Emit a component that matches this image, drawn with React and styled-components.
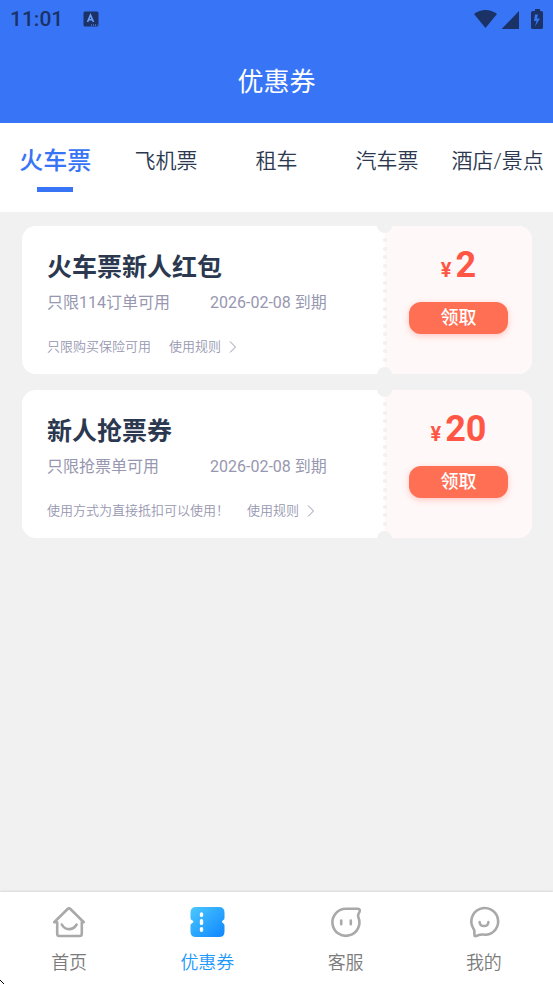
import React, { useState } from "react";
import styled, { createGlobalStyle } from "styled-components";

const tabs = ["火车票", "飞机票", "租车", "汽车票", "酒店/景点"];

const coupons = [
  { id: 1, title: "火车票新人红包", scope: "只限114订单可用", date: "2026-02-08 到期", note: "只限购买保险可用", price: 2 },
  { id: 2, title: "新人抢票券", scope: "只限抢票单可用", date: "2026-02-08 到期", note: "使用方式为直接抵扣可以使用！", price: 20 },
];

const HomeIcon = () => (
  <svg width="36" height="36" viewBox="0 0 36 36" fill="none" stroke="#a9a9a9" strokeWidth="2.6" strokeLinecap="round" strokeLinejoin="round">
    <path d="M5.6 18.2H3.2L16.6 5Q18 3.600 19.400 5L32.800 18.200H30.800V29.800Q30.800 32 28.600 32H8.400Q6.200 32 6.200 29.800V18.200" />
    <path d="M10.800 20.500C14 26.600 22 26.600 25.600 20.500" />
  </svg>
);

const CouponIcon = () => (
  <svg width="36" height="36" viewBox="0 0 36 36">
    <defs>
      <linearGradient id="couponFill" x1="0" y1="0" x2="1" y2="1">
        <stop offset="0" stopColor="#4cc8ff" />
        <stop offset="1" stopColor="#0d86ff" />
      </linearGradient>
    </defs>
    <path fill="url(#couponFill)" d="M7 3H30Q35.500 3 35.500 8.500V14Q35.500 15.500 34.400 16.100Q31.600 17.800 34.400 19.500Q35.500 20.200 35.500 21.500V27.500Q35.500 33 30 33H7Q1.500 33 1.500 27.500V21.500Q1.500 20.200 2.600 19.500Q6.400 17.800 2.600 16.100Q1.500 15.500 1.500 14V8.500Q1.500 3 7 3Z" />
    <path stroke="#fff" strokeWidth="3.400" strokeLinecap="round" d="M12.500 10V11.400M12.500 16.800V19.400M12.500 24.800V26.200" />
  </svg>
);

const ServiceIcon = () => (
  <svg width="36" height="36" viewBox="0 0 36 36" fill="none" stroke="#a9a9a9" strokeWidth="2.6" strokeLinecap="round" strokeLinejoin="round">
    <path d="M18 4.800H29.500Q32.600 4.800 31.600 7.400L30.200 10.800Q29.800 12 30.400 13.200A13.500 13.500 0 1 1 18 4.800Z" />
    <path d="M13.200 16.500V20.200M22.800 16.500V20.200" />
  </svg>
);

const MineIcon = () => (
  <svg width="36" height="36" viewBox="0 0 36 36" fill="none" stroke="#a9a9a9" strokeWidth="2.6" strokeLinecap="round" strokeLinejoin="round">
    <path d="M8.400 31V27.200Q8.400 25.800 7.400 24.600A13.400 13.400 0 1 1 20 30.800Q15 30 10.800 31.800Q8.400 32.800 8.400 31Z" />
    <path d="M13.600 18C14 23.400 22 23.400 22.400 18" />
  </svg>
);

const navItems = [
  { label: "首页", Icon: HomeIcon },
  { label: "优惠券", Icon: CouponIcon },
  { label: "客服", Icon: ServiceIcon },
  { label: "我的", Icon: MineIcon },
];

const StatusIcons = () => (
  <svg width="72" height="24" viewBox="0 0 72 24" fill="#1a3266">
    <path d="M12.500 21L1 7C8 1.600 17 1.600 24 7Z" />
    <path d="M46 4V22H28.600Z" />
    <path fillRule="evenodd" d="M61 4H62V2H67V4H68Q70 4 70 5.500V20.500Q70 22 68 22H60Q58 22 58 20.500V5.500Q58 4 60 4ZM65 7.500H62L61 14H63.500L62 19.500L67 11.500H64Z" />
  </svg>
);

const KeyboardIcon = () => (
  <svg width="16" height="16" viewBox="0 0 16 16">
    <rect x="0.500" y="0.500" width="15" height="15" rx="1.500" fill="#1a3266" />
    <path d="M4.500 11L7.500 4L10.500 11M5.600 8.800H9.400" fill="none" stroke="#6f9dfb" strokeWidth="1.600" />
    <path d="M8 14H14.500" stroke="#6f9dfb" strokeDasharray="1 1" />
  </svg>
);

const App = () => {
  const [tab, setTab] = useState(0);
  const [page, setPage] = useState(1);

  return (
    <Screen>
      <GlobalStyle />
      <Header>
        <StatusBar>
          <Clock>11:01</Clock>
          <KeyboardIcon />
          <StatusRight>
            <StatusIcons />
          </StatusRight>
        </StatusBar>
        <PageTitle>优惠券</PageTitle>
      </Header>

      <Tabs>
        {tabs.map((name, i) => (
          <Tab key={name} $active={i === tab} onClick={() => setTab(i)}>
            {name}
          </Tab>
        ))}
      </Tabs>

      <CouponList>
        {coupons.map((item) => (
          <Coupon key={item.id}>
            <CouponInfo>
              <CouponTitle>{item.title}</CouponTitle>
              <CouponScope>
                <span>{item.scope}</span>
                <span>{item.date}</span>
              </CouponScope>
              <CouponNote>
                <span>{item.note}</span>
                <RuleButton>
                  使用规则
                  <svg width="8" height="12" viewBox="0 0 8 12" fill="none" stroke="currentColor">
                    <path d="M1 0.500L6.500 6L1 11.500" />
                  </svg>
                </RuleButton>
              </CouponNote>
            </CouponInfo>
            <CouponSide>
              <Price>
                <small>¥</small>
                {item.price}
              </Price>
              <ClaimButton>领取</ClaimButton>
            </CouponSide>
            <TearLine>
              {Array.from({ length: 15 }, (_, i) => (
                <i key={i} />
              ))}
            </TearLine>
          </Coupon>
        ))}
      </CouponList>

      <BottomNav>
        {navItems.map(({ label, Icon }, i) => (
          <NavButton key={label} $active={i === page} onClick={() => setPage(i)}>
            <Icon />
            {label}
          </NavButton>
        ))}
      </BottomNav>
      <Pointer width="5" height="4" viewBox="0 0 5 4">
        <path d="M0 0H1V1H2V2H3V3H4V4H3V3H2V2H1V1H0Z" />
      </Pointer>
    </Screen>
  );
};

const GlobalStyle = createGlobalStyle`
  * {
    box-sizing: border-box;
  }
  body {
    margin: 0;
    background: #f1f1f1;
    font-family: Roboto, "Noto Sans CJK SC", sans-serif;
  }
  button {
    padding: 0;
    border: 0;
    background: none;
    font-family: inherit;
    cursor: pointer;
  }
  svg {
    display: block;
  }
`;

const Screen = styled.div`
  display: flex;
  flex-direction: column;
  min-height: 100vh;
`;

const Header = styled.header`
  background: #3875f6;
  padding-bottom: 22px;
`;

const StatusBar = styled.div`
  display: flex;
  align-items: center;
  gap: 20px;
  height: 37px;
  padding: 0 8px 0 10px;
`;

const Clock = styled.span`
  color: #1a3266;
  font-size: 21px;
  font-weight: 500;
  line-height: 40px;
`;

const StatusRight = styled.div`
  margin-left: auto;
`;

const PageTitle = styled.h1`
  margin: 0;
  padding-top: 26px;
  color: #fff;
  font-size: 26px;
  font-weight: 400;
  line-height: 38px;
  text-align: center;
`;

const Tabs = styled.nav`
  display: grid;
  grid-template-columns: repeat(5, 1fr);
  height: 89px;
  padding-top: 21px;
  background: #fff;
`;

const Tab = styled.button`
  display: flex;
  flex-direction: column;
  align-items: center;
  height: 50px;
  color: ${(p) => (p.$active ? "#3875f6" : "#2b3850")};
  font-size: ${(p) => (p.$active ? "24px" : "21px")};
  font-weight: ${(p) => (p.$active ? 500 : 350)};
  line-height: 34px;
  white-space: nowrap;

  &::after {
    content: "";
    width: 36px;
    height: 5px;
    margin-top: 9px;
    background: ${(p) => (p.$active ? "#3875f6" : "transparent")};
  }
`;

const CouponList = styled.main`
  display: flex;
  flex: 1;
  flex-direction: column;
  gap: 16px;
  padding: 14px 21px 14px 22px;
`;

const Coupon = styled.article`
  position: relative;
  display: grid;
  grid-template-columns: 1fr 147px;
  height: 148px;
  border-radius: 14px;
  background: #fff;
  overflow: hidden;
`;

const CouponInfo = styled.div`
  padding: 24px 0 0 25px;
  white-space: nowrap;
`;

const CouponTitle = styled.h2`
  margin: 0;
  color: #2b3850;
  font-size: 25px;
  font-weight: 700;
  line-height: 36px;
`;

const CouponScope = styled.div`
  display: grid;
  grid-template-columns: 163px 1fr;
  padding-top: 5px;
  color: #9797b0;
  font-size: 16px;
  line-height: 24px;
`;

const CouponNote = styled.div`
  display: flex;
  gap: 18px;
  padding-top: 22px;
  color: #9797b0;
  font-size: 13px;
  font-weight: 350;
  line-height: 20px;
`;

const RuleButton = styled.button`
  display: flex;
  align-items: center;
  gap: 8px;
  color: inherit;
  font-size: inherit;
  font-weight: inherit;
  line-height: inherit;
`;

const CouponSide = styled.div`
  display: flex;
  flex-direction: column;
  align-items: center;
  background: #fff8f8;
`;

const Price = styled.div`
  padding-top: 18px;
  color: #ff5645;
  font-size: 36px;
  font-weight: 700;
  line-height: 42px;

  small {
    margin-right: 4px;
    font-size: 20px;
  }
`;

const ClaimButton = styled.button`
  width: 99px;
  height: 32px;
  margin-top: 11px;
  border-radius: 12px;
  background: #ff6f54;
  box-shadow: 0 2px 6px rgba(255, 86, 69, 0.3);
  color: #fff;
  font-size: 18px;
  font-weight: 500;
  line-height: 32px;
`;

/* notches and perforation lie over the seam of the two halves */
const TearLine = styled.div`
  position: absolute;
  top: -8px;
  bottom: -8px;
  right: 140px;
  display: flex;
  flex-direction: column;
  align-items: center;
  justify-content: space-between;
  width: 15px;
  padding: 20px 0;

  &::before,
  &::after {
    content: "";
    position: absolute;
    top: 0;
    width: 15px;
    height: 15px;
    border-radius: 50%;
    background: #f1f1f1;
  }
  &::after {
    top: auto;
    bottom: 0;
  }
  i {
    width: 4px;
    height: 4px;
    border-radius: 50%;
    background: #f1f1f1;
  }
`;

const BottomNav = styled.nav`
  display: grid;
  grid-template-columns: repeat(4, 1fr);
  height: 92px;
  background: #fff;
  box-shadow: 0 -1px 2px rgba(0, 0, 0, 0.1);
`;

const NavButton = styled.button`
  display: flex;
  flex-direction: column;
  align-items: center;
  gap: 10px;
  padding-top: 12px;
  color: ${(p) => (p.$active ? "#1d98fb" : "#7b7b7b")};
  font-size: 18px;
  font-weight: 350;
  line-height: 26px;
`;

const Pointer = styled.svg`
  position: fixed;
  left: 0;
  bottom: 0;
`;

export default App;
